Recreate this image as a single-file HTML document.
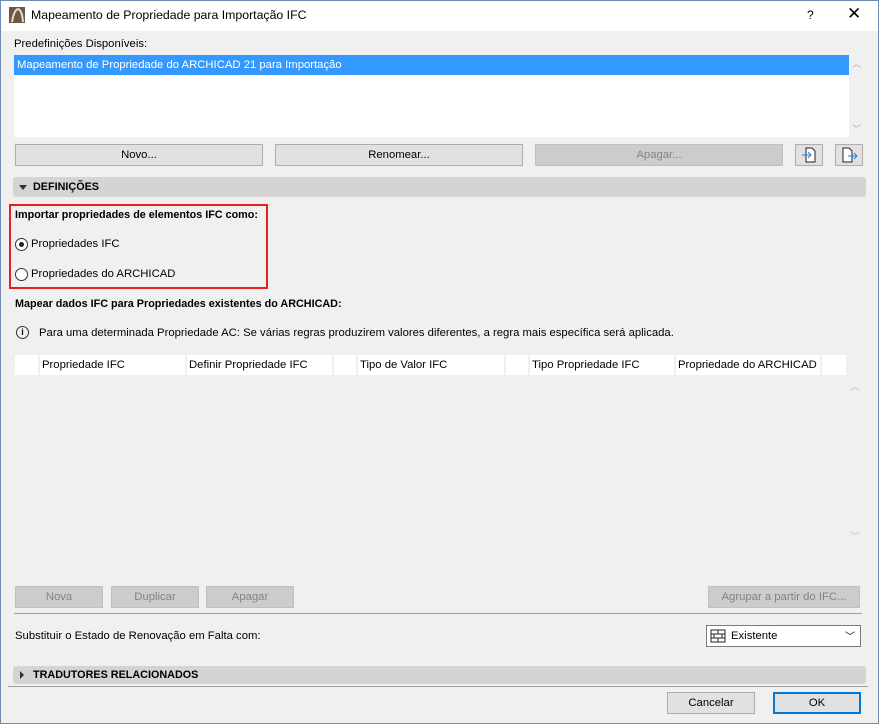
<!DOCTYPE html>
<html><head><meta charset="utf-8"><style>
*{box-sizing:border-box;margin:0;padding:0}
body{width:879px;height:724px;background:#f0f0f0;font-family:"Liberation Sans",sans-serif;font-size:11.3px;color:#000;position:relative;overflow:hidden}
.a{position:absolute}
.b{font-weight:bold;font-size:10.8px}
.btn{position:absolute;background:#e1e1e1;border:1px solid #adadad;text-align:center;line-height:21px;height:22px}
.dis{background:#cccccc;border-color:#bfbfbf;color:#838383}
.th{position:absolute;top:355px;height:20px;background:#fff;line-height:20px;padding-left:2px;white-space:nowrap;overflow:hidden}
.hdr{position:absolute;left:13px;width:853px;height:20px;background:#d4d4d4;border-radius:3px;font-weight:bold;font-size:10.8px;line-height:20px;padding-left:20px}
</style></head><body>
<div class="a" style="left:0;top:0;width:879px;height:31px;background:#fff"></div>
<svg class="a" style="left:9px;top:7px" width="16" height="16"><rect width="16" height="16" fill="#6b5a48"/><path d="M3 15 Q5 3 9 2 Q13 3 14 15" stroke="#e8dcc8" stroke-width="2" fill="none"/></svg>
<div class="a" style="left:31px;top:8px;font-size:12.3px">Mapeamento de Propriedade para Importação IFC</div>
<div class="a" style="left:807px;top:8px;font-size:12px">?</div>
<div class="a" style="left:847px;top:4px;font-size:17px">✕</div>
<div class="a" style="left:14px;top:38px">Predefinições Disponíveis:</div>
<div class="a" style="left:14px;top:55px;width:835px;height:82px;background:#fff"></div>
<div class="a" style="left:14px;top:55px;width:835px;height:20px;background:#3399ff;color:#fff;line-height:20px;padding-left:3px">Mapeamento de Propriedade do ARCHICAD 21 para Importação</div>
<div class="a" style="left:852px;top:57px;color:#aaa;font-size:9px">︿</div>
<div class="a" style="left:852px;top:122px;color:#aaa;font-size:9px">﹀</div>
<div class="btn" style="left:15px;top:144px;width:248px">Novo...</div>
<div class="btn" style="left:275px;top:144px;width:248px">Renomear...</div>
<div class="btn dis" style="left:535px;top:144px;width:248px">Apagar...</div>
<div class="btn" style="left:795px;top:144px;width:28px"><svg width="20" height="20"><path d="M7 3h6l3 3v11H7z" fill="#fff" stroke="#222"/><path d="M3 10h9m-3-3l3 3-3 3" stroke="#2a7ae2" fill="none"/></svg></div>
<div class="btn" style="left:835px;top:144px;width:28px"><svg width="20" height="20"><path d="M4 3h6l3 3v11H4z" fill="#fff" stroke="#222"/><path d="M9 11h9m-3-3l3 3-3 3" stroke="#2a7ae2" fill="none"/></svg></div>
<div class="hdr" style="top:177px">DEFINIÇÕES</div>
<div class="a" style="left:19px;top:185px;border:4px solid transparent;border-top:5px solid #333"></div>
<div class="a" style="left:9px;top:204px;width:259px;height:85px;border:2px solid #e52020"></div>
<div class="a b" style="left:15px;top:209px">Importar propriedades de elementos IFC como:</div>
<div class="a" style="left:15px;top:238px;width:13px;height:13px;border:1px solid #333;border-radius:50%;background:#fff"><div class="a" style="left:3px;top:3px;width:5px;height:5px;border-radius:50%;background:#222"></div></div>
<div class="a" style="left:31px;top:238px">Propriedades IFC</div>
<div class="a" style="left:15px;top:268px;width:13px;height:13px;border:1px solid #333;border-radius:50%;background:#fff"></div>
<div class="a" style="left:31px;top:268px">Propriedades do ARCHICAD</div>
<div class="a b" style="left:15px;top:298px">Mapear dados IFC para Propriedades existentes do ARCHICAD:</div>
<div class="a" style="left:16px;top:326px;width:13px;height:13px;border:1px solid #333;border-radius:50%;font-size:9px;text-align:center;line-height:11px;font-weight:bold">i</div>
<div class="a" style="left:39px;top:327px">Para uma determinada Propriedade AC: Se várias regras produzirem valores diferentes, a regra mais específica será aplicada.</div>
<div class="th" style="left:15px;width:23px"></div>
<div class="th" style="left:40px;width:145px">Propriedade IFC</div>
<div class="th" style="left:187px;width:145px">Definir Propriedade IFC</div>
<div class="th" style="left:334px;width:22px"></div>
<div class="th" style="left:358px;width:146px">Tipo de Valor IFC</div>
<div class="th" style="left:506px;width:22px"></div>
<div class="th" style="left:530px;width:144px">Tipo Propriedade IFC</div>
<div class="th" style="left:676px;width:144px">Propriedade do ARCHICAD</div>
<div class="th" style="left:822px;width:24px"></div>
<div class="a" style="left:850px;top:378px;color:#bbb;font-size:10px">︿</div>
<div class="a" style="left:850px;top:528px;color:#bbb;font-size:10px">﹀</div>
<div class="btn dis" style="left:15px;top:586px;width:88px">Nova</div>
<div class="btn dis" style="left:111px;top:586px;width:88px">Duplicar</div>
<div class="btn dis" style="left:206px;top:586px;width:88px">Apagar</div>
<div class="btn dis" style="left:708px;top:586px;width:152px">Agrupar a partir do IFC...</div>
<div class="a" style="left:14px;top:613px;width:848px;height:1px;background:#a0a0a0"></div>
<div class="a" style="left:15px;top:630px">Substituir o Estado de Renovação em Falta com:</div>
<div class="a" style="left:706px;top:625px;width:155px;height:22px;background:#fff;border:1px solid #7a7a7a;line-height:20px;padding-left:24px">Existente<span style="position:absolute;right:5px;top:2px;font-size:10px">﹀</span>
<svg class="a" style="left:3px;top:3px" width="16" height="14"><path d="M1 1h14v12H1zM1 5h14M1 9h14M8 1v4M4 5v4M12 5v4M8 9v4" stroke="#222" fill="none"/></svg></div>
<div class="hdr" style="top:666px;height:18px;line-height:18px">TRADUTORES RELACIONADOS</div>
<div class="a" style="left:20px;top:671px;border:4px solid transparent;border-left:4px solid #333;border-right:0"></div>
<div class="a" style="left:8px;top:686px;width:860px;height:1px;background:#a0a0a0"></div>
<div class="btn" style="left:667px;top:692px;width:88px">Cancelar</div>
<div class="btn" style="left:773px;top:692px;width:88px;border:2px solid #0078d7;line-height:19px">OK</div>
<div class="a" style="left:0;top:0;width:879px;height:724px;border:1px solid #6d8db5"></div>
</body></html>
